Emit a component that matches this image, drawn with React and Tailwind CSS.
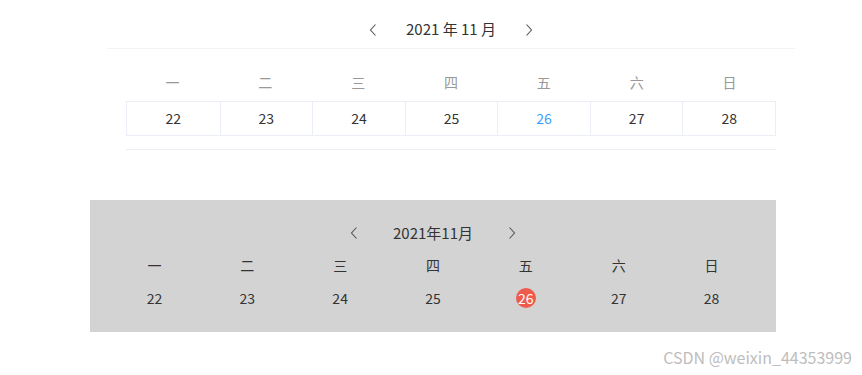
import React from "react";

const weekdays = ["一", "二", "三", "四", "五", "六", "日"];
const days = [22, 23, 24, 25, 26, 27, 28];
const today = 26;

const font = { fontFamily: '"Noto Sans CJK SC", "Noto Sans", sans-serif' };

const ChevronLeft = () => (
  <svg width="8" height="14" viewBox="0 0 8 14" fill="none">
    <path d="M6.5 1.5 1.5 7l5 5.5" stroke="#555" strokeWidth="1.1" />
  </svg>
);

const ChevronRight = () => (
  <svg width="8" height="14" viewBox="0 0 8 14" fill="none">
    <path d="M1.5 1.5 6.5 7l-5 5.5" stroke="#555" strokeWidth="1.1" />
  </svg>
);

// Calendar with bordered cells
const WeekCalendar = () => (
  <div className="ml-[107px] w-[688px]">
    <div className="flex h-[38px] mt-[11px] items-center justify-center border-b border-[#f2f3f5] text-[15px] text-[#333]">
      <ChevronLeft />
      <span className="mx-[29px]">2021 年 11 月</span>
      <ChevronRight />
    </div>
    <div className="px-[19px]">
      <div className="mt-[14px] grid h-[38px] grid-cols-7 items-center text-center text-[14px] text-[#999]">
        {weekdays.map((w) => (
          <span key={w}>{w}</span>
        ))}
      </div>
      <div className="grid h-[35px] grid-cols-7 border border-[#ebeef5] text-[14px] text-[#333]">
        {days.map((d, i) => (
          <div
            key={d}
            className={`flex items-center justify-center ${i > 0 ? "border-l border-[#ebeef5]" : ""} ${d === today ? "text-[#409eff]" : ""}`}
          >
            {d}
          </div>
        ))}
      </div>
      <div className="mt-[13px] h-px bg-[#ebeef5]"></div>
    </div>
  </div>
);

// Simple calendar on grey background
const GreyCalendar = () => (
  <div className="ml-[90px] mt-[50px] w-[686px] bg-[#d3d3d3] px-[18px] pt-[18px] pb-[19px] text-[14px] text-[#333]">
    <div className="flex h-[30px] items-center justify-center">
      <ChevronLeft />
      <span className="mx-[35px] text-[15px]">2021年11月</span>
      <ChevronRight />
    </div>
    <div className="mt-[2px] grid h-[30px] grid-cols-7 items-center text-center">
      {weekdays.map((w) => (
        <span key={w}>{w}</span>
      ))}
    </div>
    <div className="mt-[3px] grid h-[30px] grid-cols-7 items-center text-center">
      {days.map((d) => (
        <div key={d} className="flex justify-center">
          {d === today ? (
            <span className="flex h-[20px] w-[20px] items-center justify-center rounded-full bg-[#ee5b4d] text-white">
              {d}
            </span>
          ) : (
            <span>{d}</span>
          )}
        </div>
      ))}
    </div>
  </div>
);

export default function App() {
  return (
    <div className="relative h-[375px] w-[862px] overflow-hidden bg-white" style={font}>
      <WeekCalendar />
      <GreyCalendar />
      <div className="mt-[13px] pr-[10px] text-right text-[16px] text-[#bdbdbd]">
        CSDN @weixin_44353999
      </div>
    </div>
  );
}
